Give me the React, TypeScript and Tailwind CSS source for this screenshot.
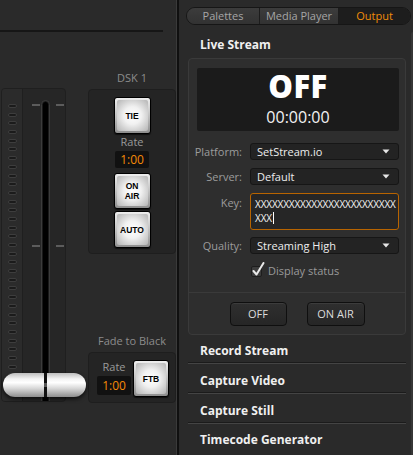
import React from "react";

const FONT = { fontFamily: '"Open Sans", "Liberation Sans", sans-serif' };

function KeyButton({ lines, className = "" }: { lines: string[]; className?: string }) {
  return (
    <div
      className={`rounded-[3px] border border-black bg-[linear-gradient(180deg,#eeeeee,#b9b9b9_60%,#8e8e8e)] p-[2px] shadow-[0_1px_1px_rgba(0,0,0,0.6)] ${className}`}
    >
      <div className="flex h-full w-full flex-col items-center justify-center rounded-[2px] bg-[radial-gradient(circle,#ffffff_0%,#f1f1f1_40%,#d2d2d2_70%,#b4b4b4_100%)]">
        {lines.map((l) => (
          <div
            key={l}
            className="text-[8.5px] font-extrabold leading-[10px] text-black"
            style={{ fontFamily: '"Liberation Sans", Arial, sans-serif' }}
          >
            {l}
          </div>
        ))}
      </div>
    </div>
  );
}

function Arrow() {
  return (
    <svg width="8" height="5" viewBox="0 0 8 5" className="shrink-0">
      <path d="M0.5 0.5 L7.5 0.5 L4 4.5 Z" fill="#e6e6e6" />
    </svg>
  );
}

function SelectRow({ label, value, mt }: { label: string; value: string; mt: string }) {
  return (
    <div className={`flex items-center ${mt}`}>
      <div className="w-[54px] pr-[1px] text-right text-[11px] leading-[14px] text-[#9c9c9c]">{label}</div>
      <div className="ml-[7px] flex h-[17px] w-[149px] items-center justify-between rounded-[3px] border border-[#161616] bg-[#232323] pl-[6px] pr-[8px]">
        <span className="text-[11px] leading-[14px] text-[#ededed]">{value}</span>
        <Arrow />
      </div>
    </div>
  );
}

function SectionRow({ title, pt, line = true }: { title: string; pt: string; line?: boolean }) {
  return (
    <div className="flex flex-col">
      <div className={`${pt} pl-[21px] pb-[3px]`}>
        <div className="text-[12px] font-bold leading-[16px] text-[#f0f0f0]">{title}</div>
      </div>
      {line && (
        <div className="ml-[9px] w-[218px] border-t border-b border-t-[#1b1b1b] border-b-[#444444]" />
      )}
    </div>
  );
}

export default function App() {
  const dashes = Array.from({ length: 34 });
  return (
    <div className="flex h-[455px] w-[413px] overflow-hidden bg-[#2a2a2a]" style={FONT}>
      {/* Left pane */}
      <div className="relative h-full w-[177px] shrink-0 border-r border-[#3a3a3a] bg-[#2a2a2a]">
        <div className="h-[30px]" />
        <div className="h-[2px] w-[163px] bg-[#161616]" />
        <div className="flex pl-[1px]">
          {/* Fader box */}
          <div className="mt-[56px] flex h-[314px] w-[65px] overflow-hidden rounded-[4px] border border-[#1f1f1f] bg-[#262626]">
            <div className="flex w-[21px] flex-col items-center gap-[4.7px] border-r border-[#1f1f1f] bg-[#2b2b2b] pt-[15px]">
              {dashes.map((_, i) => (
                <div
                  key={i}
                  className="h-[4px] w-[9px] shrink-0 rounded-full border border-[#3d3d3d] bg-[#1b1b1b]"
                />
              ))}
            </div>
            <div className="flex flex-1 pt-[11px]">
              <div className="flex w-[18px] flex-col items-end pr-[1px] pt-[4px]">
                <div className="h-[2px] w-[8px] bg-[#5c5c5c]" />
                <div className="mt-[139px] h-[2px] w-[8px] bg-[#5c5c5c]" />
              </div>
              <div className="flex h-[310px] w-[9px] justify-center rounded-t-full border border-[#3b3b3b] bg-[#1a1a1a] pt-[1px]">
                <div className="h-full w-[5px] rounded-t-full bg-black" />
              </div>
              <div className="flex flex-col pl-[6px] pt-[4px]">
                <div className="h-[2px] w-[8px] bg-[#5c5c5c]" />
                <div className="mt-[139px] h-[2px] w-[8px] bg-[#5c5c5c]" />
              </div>
            </div>
          </div>

          {/* DSK column */}
          <div className="ml-[22px] flex w-[88px] flex-col">
            <div className="flex h-[57px] items-end justify-center pb-[4px]">
              <span className="text-[11px] leading-[14px] text-[#8c8c8c]">DSK 1</span>
            </div>
            <div className="flex h-[165px] flex-col items-center rounded-[4px] border border-[#1e1e1e] bg-[#242424] pt-[7px]">
              <KeyButton lines={["TIE"]} className="h-[37px] w-[37px]" />
              <div className="flex h-[17px] items-center text-[11px] text-[#9a9a9a]">Rate</div>
              <div className="flex h-[17px] w-[34px] items-center justify-center rounded-[2px] bg-[#111111] text-[12px] leading-[14px] text-[#f58a07]">
                1:00
              </div>
              <KeyButton lines={["ON", "AIR"]} className="mt-[5px] h-[36px] w-[37px]" />
              <KeyButton lines={["AUTO"]} className="mt-[2px] h-[37px] w-[37px]" />
            </div>
            <div className="mt-[80px] flex h-[14px] items-center justify-center">
              <span className="text-[11px] leading-[14px] text-[#8c8c8c]">Fade to Black</span>
            </div>
            <div className="mt-[4px] flex h-[51px] items-start rounded-[4px] border border-[#1e1e1e] bg-[#242424] pl-[8px] pt-[7px]">
              <div className="flex w-[34px] flex-col items-center">
                <div className="flex h-[14px] items-center text-[11px] text-[#9a9a9a]">Rate</div>
                <div className="mt-[2px] flex h-[19px] w-[34px] items-center justify-center rounded-[2px] bg-[#111111] text-[12px] leading-[14px] text-[#f58a07]">
                  1:00
                </div>
              </div>
              <KeyButton lines={["FTB"]} className="ml-[2px] h-[37px] w-[36px]" />
            </div>
          </div>
        </div>

        {/* Fader handle (overlays the box) */}
        <div className="absolute left-[3px] top-[373px] flex h-[24px] w-[83px] drop-shadow-[0_2px_2px_rgba(0,0,0,0.7)]">
          <div className="h-full w-[41px] rounded-l-full bg-[linear-gradient(180deg,#bdbdbd_0%,#f4f4f4_25%,#ffffff_40%,#d6d6d6_65%,#8d8d8d_100%)]" />
          <div className="flex h-full w-[3px] flex-col justify-center bg-[#111111]">
            <div className="h-[4px] w-full bg-[#555]" />
          </div>
          <div className="h-full w-[39px] rounded-r-full bg-[linear-gradient(180deg,#bdbdbd_0%,#f4f4f4_25%,#ffffff_40%,#d6d6d6_65%,#8d8d8d_100%)]" />
        </div>
      </div>

      {/* Divider */}
      <div className="h-full w-[2px] shrink-0 bg-[#101010]" />

      {/* Right pane */}
      <div className="flex h-full w-[234px] shrink-0 flex-col bg-[#2a2a2a]">
        {/* Tabs */}
        <div className="ml-[7px] mt-[7px] flex h-[18px] w-[225px] overflow-hidden rounded-full border border-[#161616] text-[11px] leading-[14px]">
          <div className="flex w-[73px] items-center justify-center border-r border-[#1c1c1c] bg-[linear-gradient(180deg,#3c3c3c,#323232)] text-[#a6a6a6]">
            Palettes
          </div>
          <div className="flex w-[79px] items-center justify-center border-r border-[#1c1c1c] bg-[linear-gradient(180deg,#3c3c3c,#323232)] text-[#a6a6a6]">
            Media Player
          </div>
          <div className="flex flex-1 items-center justify-center bg-[#1d1d1d] text-[#f08c0a]">Output</div>
        </div>

        <div className="mt-[7px] flex flex-1">
          <div className="flex w-[232px] flex-col">
            <div className="flex h-[26px] items-center pl-[21px]">
              <span className="text-[12px] font-bold leading-[16px] text-[#f0f0f0]">Live Stream</span>
            </div>

            {/* Live stream box */}
            <div className="ml-[9px] flex h-[277px] w-[218px] flex-col rounded-[4px] border border-[#3a3a3a] bg-[#2e2e2e]">
              <div className="ml-[8px] mt-[9px] flex h-[63px] w-[202px] flex-col items-center rounded-[2px] bg-[#1b1b1b] pt-[3px]">
                <div className="text-[31px] font-extrabold leading-[31px] tracking-[0.5px] text-white">OFF</div>
                <div className="mt-[6px] text-[16px] leading-[18px] text-[#f2f2f2]">00:00:00</div>
              </div>

              <SelectRow label="Platform:" value="SetStream.io" mt="mt-[12px]" />
              <SelectRow label="Server:" value="Default" mt="mt-[8px]" />

              <div className="mt-[8px] flex items-start">
                <div className="w-[54px] pr-[1px] pt-[3px] text-right text-[11px] leading-[14px] text-[#9c9c9c]">
                  Key:
                </div>
                <div className="ml-[7px] h-[37px] w-[149px] overflow-hidden rounded-[3px] border border-[#b86400] bg-[#262626] pl-[4px] pt-[3px]">
                  <div className="whitespace-nowrap text-[10px] leading-[14px] tracking-[-0.15px] text-[#f2f2f2]">
                    XXXXXXXXXXXXXXXXXXXXXXXXX
                  </div>
                  <div className="flex items-center text-[10px] leading-[14px] tracking-[-0.15px] text-[#f2f2f2]">
                    XXX
                    <span className="ml-[1px] inline-block h-[12px] w-[1px] bg-white" />
                  </div>
                </div>
              </div>

              <SelectRow label="Quality:" value="Streaming High" mt="mt-[7px]" />

              <div className="ml-[62px] mt-[10px] flex items-center">
                <div className="relative h-[11px] w-[11px] rounded-[2px] border border-[#1d1d1d] bg-[#3d3d3d]">
                  <svg
                    width="13"
                    height="15"
                    viewBox="0 0 13 15"
                    className="absolute -top-[5px] left-[0px]"
                  >
                    <path d="M1.5 9 L4.5 12.5 L11.5 1" stroke="#e8e8e8" strokeWidth="2" fill="none" strokeLinecap="round" strokeLinejoin="round" />
                  </svg>
                </div>
                <span className="ml-[6px] text-[11px] leading-[14px] text-[#9a9a9a]">Display status</span>
              </div>

              <div className="mt-[14px] flex flex-1 items-start justify-center gap-[20px] border-t border-[#3a3a3a] pt-[9px]">
                <div className="flex h-[24px] w-[57px] items-center justify-center rounded-[4px] border border-[#0f0f0f] bg-[linear-gradient(180deg,#2f2f2f,#262626)] text-[11px] text-[#dcdcdc] shadow-[inset_0_1px_0_#3c3c3c]">
                  OFF
                </div>
                <div className="flex h-[24px] w-[58px] items-center justify-center rounded-[4px] border border-[#0f0f0f] bg-[linear-gradient(180deg,#2f2f2f,#262626)] text-[11px] text-[#dcdcdc] shadow-[inset_0_1px_0_#3c3c3c]">
                  ON AIR
                </div>
              </div>
            </div>

            <SectionRow title="Record Stream" pt="pt-[8px]" />
            <SectionRow title="Capture Video" pt="pt-[9px]" />
            <SectionRow title="Capture Still" pt="pt-[9px]" />
            <SectionRow title="Timecode Generator" pt="pt-[8px]" line={false} />
          </div>
          <div className="w-[2px] rounded-tl-[2px] bg-[#363636]" />
        </div>
      </div>
    </div>
  );
}
